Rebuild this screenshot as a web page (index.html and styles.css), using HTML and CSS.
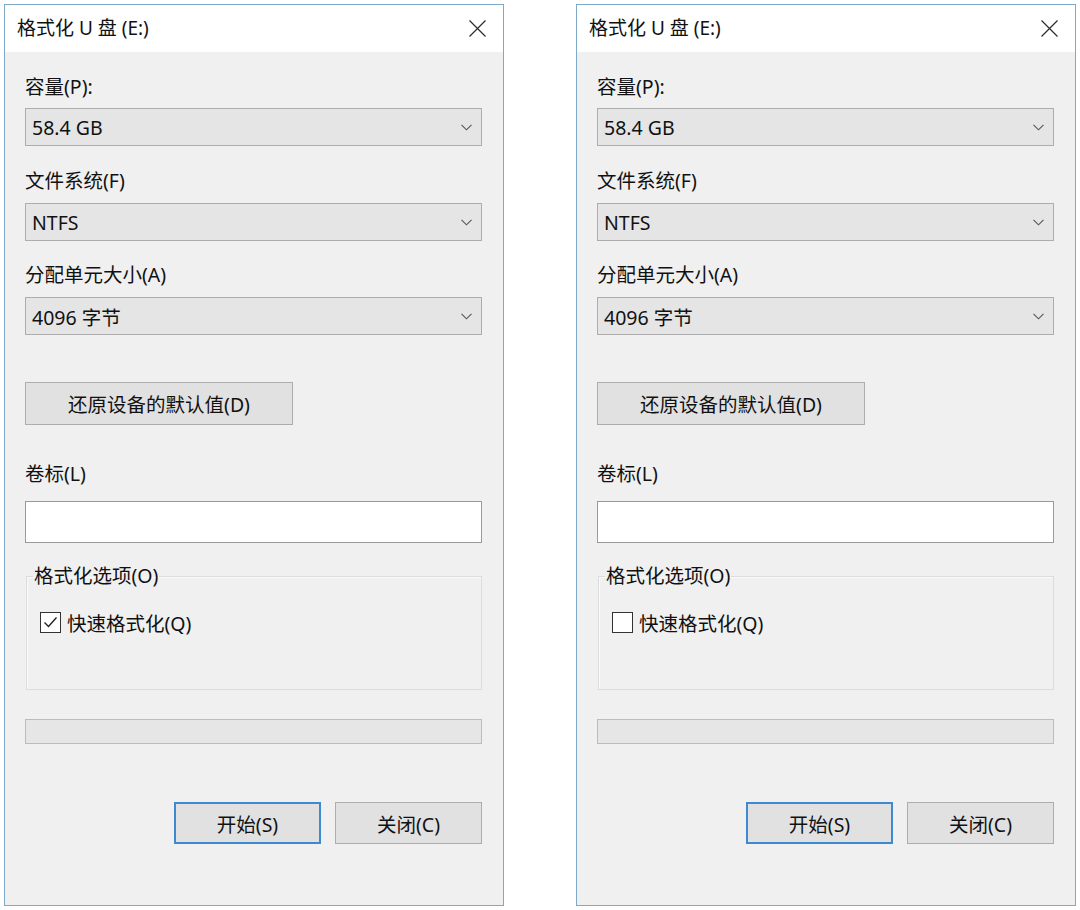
FILE: index.html
```html
<!DOCTYPE html>
<html lang="zh-CN">
<head>
<meta charset="utf-8">
<title>格式化 U 盘 (E:)</title>
<link rel="stylesheet" href="styles.css">
</head>
<body>
<div class="page">
  <div class="window">
    <div class="titlebar">
      <span class="title">格式化 U 盘 (E:)</span>
      <svg class="close" width="17" height="17" viewBox="0 0 17 17"><path d="M0.5 0.5L16.5 16.5M16.5 0.5L0.5 16.5" stroke="#2b2b2b" stroke-width="1.2" fill="none"/></svg>
    </div>
    <div class="content">
      <div class="label l1">容量(P):</div>
      <div class="select s1"><span>58.4 GB</span><svg class="chev" width="11" height="7" viewBox="0 0 11 7"><path d="M0.5 0.8L5.5 5.8L10.5 0.8" stroke="#555" stroke-width="1.1" fill="none"/></svg></div>
      <div class="label l2">文件系统(F)</div>
      <div class="select s2"><span>NTFS</span><svg class="chev" width="11" height="7" viewBox="0 0 11 7"><path d="M0.5 0.8L5.5 5.8L10.5 0.8" stroke="#555" stroke-width="1.1" fill="none"/></svg></div>
      <div class="label l3">分配单元大小(A)</div>
      <div class="select s3"><span>4096 字节</span><svg class="chev" width="11" height="7" viewBox="0 0 11 7"><path d="M0.5 0.8L5.5 5.8L10.5 0.8" stroke="#555" stroke-width="1.1" fill="none"/></svg></div>
      <div class="btn reset">还原设备的默认值(D)</div>
      <div class="label l4">卷标(L)</div>
      <div class="input"></div>
      <fieldset class="group">
        <legend>格式化选项(O)</legend>
        <div class="check-row">
          <span class="checkbox"><svg width="19" height="19" viewBox="0 0 19 19"><path d="M3.5 9.5L7.5 13.5L15.5 4.5" stroke="#222" stroke-width="1.4" fill="none"/></svg></span>
          <span>快速格式化(Q)</span>
        </div>
      </fieldset>
      <div class="progress"></div>
      <div class="actions">
        <div class="btn primary">开始(S)</div>
        <div class="btn">关闭(C)</div>
      </div>
    </div>
  </div>
  <div class="window">
    <div class="titlebar">
      <span class="title">格式化 U 盘 (E:)</span>
      <svg class="close" width="17" height="17" viewBox="0 0 17 17"><path d="M0.5 0.5L16.5 16.5M16.5 0.5L0.5 16.5" stroke="#2b2b2b" stroke-width="1.2" fill="none"/></svg>
    </div>
    <div class="content">
      <div class="label l1">容量(P):</div>
      <div class="select s1"><span>58.4 GB</span><svg class="chev" width="11" height="7" viewBox="0 0 11 7"><path d="M0.5 0.8L5.5 5.8L10.5 0.8" stroke="#555" stroke-width="1.1" fill="none"/></svg></div>
      <div class="label l2">文件系统(F)</div>
      <div class="select s2"><span>NTFS</span><svg class="chev" width="11" height="7" viewBox="0 0 11 7"><path d="M0.5 0.8L5.5 5.8L10.5 0.8" stroke="#555" stroke-width="1.1" fill="none"/></svg></div>
      <div class="label l3">分配单元大小(A)</div>
      <div class="select s3"><span>4096 字节</span><svg class="chev" width="11" height="7" viewBox="0 0 11 7"><path d="M0.5 0.8L5.5 5.8L10.5 0.8" stroke="#555" stroke-width="1.1" fill="none"/></svg></div>
      <div class="btn reset">还原设备的默认值(D)</div>
      <div class="label l4">卷标(L)</div>
      <div class="input"></div>
      <fieldset class="group">
        <legend>格式化选项(O)</legend>
        <div class="check-row">
          <span class="checkbox"></span>
          <span>快速格式化(Q)</span>
        </div>
      </fieldset>
      <div class="progress"></div>
      <div class="actions">
        <div class="btn primary">开始(S)</div>
        <div class="btn">关闭(C)</div>
      </div>
    </div>
  </div>
</div>
</body>
</html>
```
FILE: styles.css
```css
* { box-sizing: border-box; }
html, body { margin: 0; padding: 0; background: #ffffff; }
body {
  font-family: "Noto Sans", "Noto Sans CJK SC", sans-serif;
  color: #111111;
  font-size: 19.5px;
}
.page {
  display: flex;
  gap: 72px;
  padding: 4px 0 0 4px;
}
.window {
  width: 500px;
  height: 902px;
  border: 1px solid #7ea9c9;
  background: #f0f0f0;
  display: flex;
  flex-direction: column;
}
.titlebar {
  height: 47px;
  background: #ffffff;
  display: flex;
  align-items: center;
  justify-content: space-between;
  padding: 0 17px 0 12px;
  flex-shrink: 0;
}
.title {
  font-size: 19px;
  line-height: 26px;
  margin-top: -2px;
}
.close { display: block; margin-top: -1px; }
.content {
  display: flex;
  flex-direction: column;
  padding: 0 21px 0 20px;
}
.label {
  line-height: 26px;
  height: 26px;
}
.l1 { margin-top: 22px; }
.l2 { margin-top: 22px; }
.l3 { margin-top: 21px; }
.l4 { margin-top: 36px; }
.select {
  height: 38px;
  background: #e5e5e5;
  border: 1px solid #adadad;
  display: flex;
  align-items: center;
  justify-content: space-between;
  padding: 0 9px 0 6px;
}
.s1 { margin-top: 8px; }
.s2 { margin-top: 9px; }
.s3 { margin-top: 9px; }
.chev { display: block; }
.btn {
  height: 42px;
  background: #e1e1e1;
  border: 1px solid #adadad;
  display: flex;
  align-items: center;
  justify-content: center;
}
.reset {
  width: 268px;
  height: 43px;
  margin-top: 47px;
}
.input {
  height: 42px;
  margin-top: 14px;
  background: #ffffff;
  border: 1px solid #9a9a9a;
}
.group {
  margin: 20px 0 0 1px;
  height: 127px;
  border: 1px solid #dcdcdc;
  box-shadow: inset 1px 1px 0 #fafafa;
  padding: 0 13px;
  min-width: 0;
}
.group legend {
  padding: 0 1px;
  margin-left: -7px;
  line-height: 26px;
}
.check-row {
  display: flex;
  align-items: center;
  gap: 6px;
  margin-top: 19px;
}
.checkbox {
  width: 21px;
  height: 21px;
  border: 1px solid #333333;
  background: #ffffff;
  display: flex;
  align-items: center;
  justify-content: center;
}
.checkbox svg { display: block; }
.progress {
  margin-top: 29px;
  height: 25px;
  background: #e6e6e6;
  border: 1px solid #bcbcbc;
}
.actions {
  margin-top: 58px;
  display: flex;
  justify-content: flex-end;
  gap: 14px;
}
.actions .btn { width: 147px; }
.btn.primary {
  border: 2px solid #3d8ad3;
}
```
